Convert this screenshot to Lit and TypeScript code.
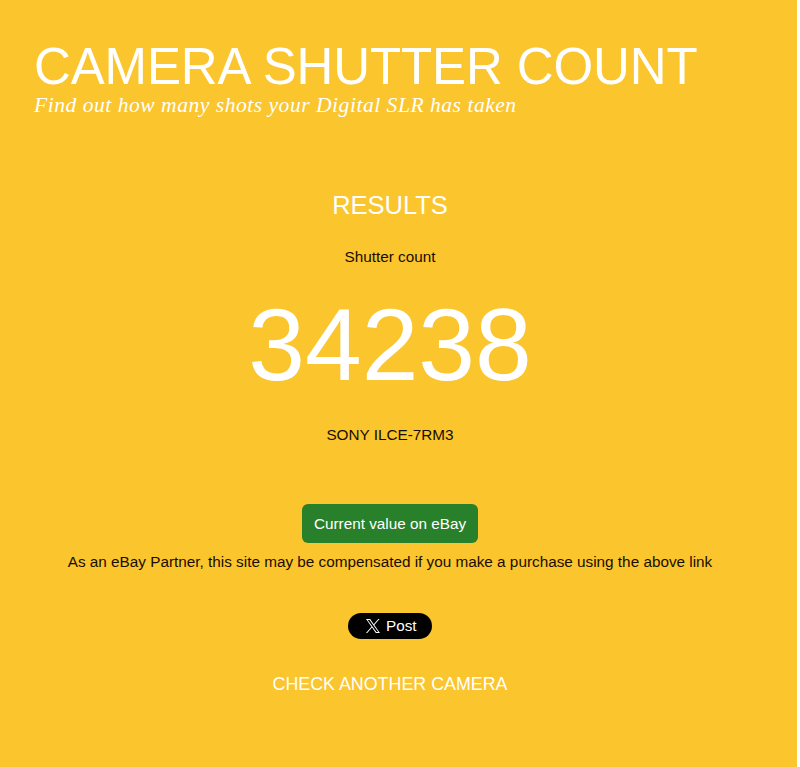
/**
 * Camera Shutter Count results page
 */

import { LitElement, html, css } from 'lit';
import { customElement, property } from 'lit/decorators.js';

@customElement('post-button')
export class PostButton extends LitElement {
  static styles = css`
    :host {
      display: inline-flex;
    }

    .post {
      display: flex;
      align-items: center;
      gap: 6px;
      box-sizing: border-box;
      width: 84px;
      height: 26px;
      padding: 0 0 0 18px;
      border-radius: 13px;
      background: #000;
      color: #fff;
      font-size: 15.3px;
      line-height: 26px;
      text-decoration: none;
    }

    .post svg {
      width: 14px;
      height: 14px;
      flex: none;
    }
  `;

  render() {
    return html`
      <a class="post" href="#">
        <svg viewBox="0 0 24 24" fill="currentColor">
          <path d="M14.258 10.152L23.176 0h-2.113l-7.747 8.813L7.133 0H0l9.352 13.328L0 23.973h2.113l8.176-9.309 6.531 9.309h7.133zm-2.895 3.293l-.949-1.328L2.875 1.56h3.246l6.086 8.523.945 1.328 7.91 11.078h-3.246z"/>
        </svg>
        <span>Post</span>
      </a>
    `;
  }
}

@customElement('app-root')
export class AppRoot extends LitElement {
  static styles = css`
    :host {
      display: block;
      background: #fff;
      font-family: 'Liberation Sans', Arial, sans-serif;
      font-size: 15.3px;
      color: #1a0d00;
    }

    .page {
      box-sizing: border-box;
      width: 797px;
      height: 767px;
      padding: 39px 51px 0 34px;
      overflow: hidden;
      background: #fbc52d;
    }

    h1,
    h2,
    p {
      margin: 0;
      font-weight: normal;
    }

    h1 {
      font-size: 51px;
      line-height: 56px;
      letter-spacing: -0.12px;
      color: #fff;
      white-space: nowrap;
    }

    .tagline {
      font-family: Georgia, 'Liberation Serif', serif;
      font-style: italic;
      font-size: 21.6px;
      line-height: 20px;
      letter-spacing: 0.5px;
      color: #fff;
      white-space: nowrap;
    }

    .results {
      display: flex;
      flex-direction: column;
      align-items: center;
      margin-top: 75px;
      line-height: 20px;
      white-space: nowrap;
    }

    h2 {
      font-size: 25.5px;
      line-height: 30px;
      color: #fff;
    }

    .label {
      margin-top: 27px;
    }

    .count {
      margin-top: 20px;
      font-size: 102px;
      line-height: 116px;
      color: #fff;
    }

    .model {
      margin-top: 22px;
    }

    .value {
      margin-top: 59px;
      padding: 0 12px;
      border-radius: 6px;
      background: #28802a;
      color: #fff;
      line-height: 39px;
      text-decoration: none;
    }

    .notice {
      margin-top: 9px;
    }

    post-button {
      margin-top: 41px;
    }

    .again {
      margin-top: 34px;
      font-size: 17.85px;
      line-height: 22px;
      color: #fff;
      text-decoration: none;
    }
  `;

  @property({ type: Number })
  count = 34238;

  @property({ type: String })
  model = 'SONY ILCE-7RM3';

  render() {
    return html`
      <div class="page">
        <header>
          <h1>CAMERA SHUTTER COUNT</h1>
          <p class="tagline">Find out how many shots your Digital SLR has taken</p>
        </header>
        <main class="results">
          <h2>RESULTS</h2>
          <p class="label">Shutter count</p>
          <p class="count">${this.count}</p>
          <p class="model">${this.model}</p>
          <a class="value" href="#">Current value on eBay</a>
          <p class="notice">As an eBay Partner, this site may be compensated if you make a purchase using the above link</p>
          <post-button></post-button>
          <a class="again" href="#">CHECK ANOTHER CAMERA</a>
        </main>
      </div>
    `;
  }
}

declare global {
  interface HTMLElementTagNameMap {
    'app-root': AppRoot;
    'post-button': PostButton;
  }
}
